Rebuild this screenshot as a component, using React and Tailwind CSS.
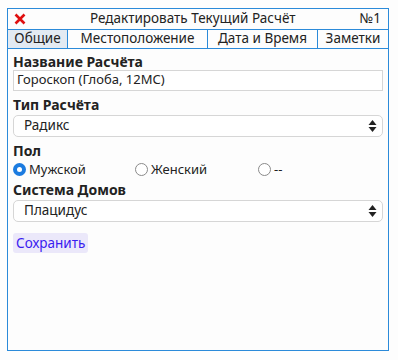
import React from "react";

function Arrows() {
  return (
    <svg width="9" height="14" viewBox="0 0 9 14" className="shrink-0">
      <path d="M4.5 1 L8.5 6 L0.5 6 Z" fill="#222" />
      <path d="M4.5 13 L8.5 8 L0.5 8 Z" fill="#222" />
    </svg>
  );
}

function Select({ value }) {
  return (
    <div className="mt-[2px] h-[22px] flex items-center justify-between pl-[10px] pr-[5px] border border-[#d6d6d6] rounded-[5px] bg-white text-[13.5px] text-[#222]">
      <span>{value}</span>
      <Arrows />
    </div>
  );
}

function Radio({ checked, label }) {
  return (
    <label className="flex items-center gap-[3px] text-[13px] text-[#222]">
      {checked ? (
        <span className="w-[13px] h-[13px] rounded-full bg-[#1b7be0] flex items-center justify-center">
          <span className="w-[5px] h-[5px] rounded-full bg-white" />
        </span>
      ) : (
        <span className="w-[13px] h-[13px] rounded-full border border-[#8a8a8a] bg-white" />
      )}
      {label}
    </label>
  );
}

export default function App() {
  const tabs = [
    { name: "Общие", w: "w-[59px]", active: true },
    { name: "Местоположение", w: "w-[140px]" },
    { name: "Дата и Время", w: "w-[110px]" },
    { name: "Заметки", w: "flex-1" },
  ];
  return (
    <div className="w-[398px] h-[360px] bg-[#fdfdfd] pt-[7.5px] pl-[7px]" style={{ fontFamily: '"Noto Sans", sans-serif' }}>
      <div className="w-[382px] h-[343px] border-[1.5px] border-[#2b8ad9] bg-[#fdfdfd] flex flex-col">
        {/* title */}
        <div className="h-[20px] flex items-center px-[6px] text-[13.5px] text-[#222]">
          <svg width="12" height="12" viewBox="0 0 12 12" className="shrink-0">
            <path d="M1.5 1.5 L10.5 10.5 M10.5 1.5 L1.5 10.5" stroke="#e01010" strokeWidth="2.6" />
          </svg>
          <span className="flex-1 text-center">Редактировать Текущий Расчёт</span>
          <span className="pr-[1px]">№1</span>
        </div>
        {/* tabs */}
        <div className="flex h-[20px] border-y border-[#2b8ad9] text-[13.5px] text-[#222]">
          {tabs.map((t, i) => (
            <div
              key={t.name}
              className={`${t.w} flex items-center justify-center ${i > 0 ? "border-l border-[#2b8ad9]" : ""} ${t.active ? "bg-[#e3eaf2]" : ""}`}
            >
              {t.name}
            </div>
          ))}
        </div>
        {/* form */}
        <div className="px-[5px] pt-[5px] flex flex-col text-[#222]">
          <div className="h-[16px] text-[14px] font-bold leading-[16px]">Название Расчёта</div>
          <div className="h-[21px] flex items-center px-[3px] border border-[#d6d6d6] bg-white text-[13px]">
            Гороскоп (Глоба, 12МС)
          </div>

          <div className="mt-[6px] h-[16px] text-[14px] font-bold leading-[16px]">Тип Расчёта</div>
          <Select value="Радикс" />

          <div className="mt-[6px] h-[16px] text-[14px] font-bold leading-[16px]">Пол</div>
          <div className="mt-[1px] grid grid-cols-[122px_123px_1fr] h-[16px] items-center">
            <Radio checked label="Мужской" />
            <Radio label="Женский" />
            <Radio label="--" />
          </div>

          <div className="mt-[6px] h-[16px] text-[14px] font-bold leading-[16px]">Система Домов</div>
          <Select value="Плацидус" />

          <div className="mt-[8px]">
            <button className="h-[20px] px-[3px] rounded-[3px] bg-[#ebe8fa] text-[13.5px] text-[#3a1cf0] leading-none">
              Сохранить
            </button>
          </div>
        </div>
      </div>
    </div>
  );
}
